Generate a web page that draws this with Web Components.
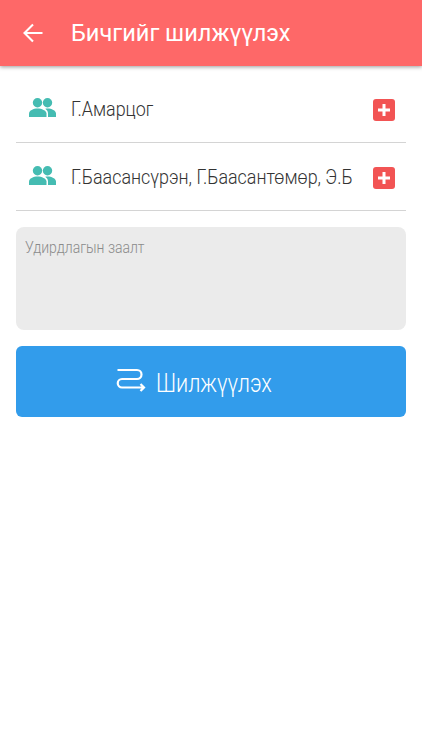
<!DOCTYPE html>
<html><head><meta charset="utf-8"><style>
html,body{margin:0;padding:0;background:#fff;font-family:Roboto,"Noto Sans",sans-serif}
body{width:422px;height:750px;overflow:hidden}
</style></head><body>
<app-bar title="Бичгийг шилжүүлэх"></app-bar>
<main-form>
<person-row>Г.Амарцог</person-row>
<person-row>Г.Баасансүрэн, Г.Баасантөмөр, Э.Б</person-row>
<note-box>Удирдлагын заалт</note-box>
<move-button>Шилжүүлэх</move-button>
</main-form>
<script>
function def(name,html){
 customElements.define(name,class extends HTMLElement{
  constructor(){super();const r=this.attachShadow({mode:'open'});r.innerHTML=html;}
  connectedCallback(){const t=this.shadowRoot.querySelector('[data-title]');if(t)t.textContent=this.getAttribute('title');}
 });
}
def('app-bar',`<style>
:host{display:flex;align-items:center;height:66px;background:#fe6868;color:#fff;box-shadow:0 1px 4px rgba(0,0,0,.4);position:relative;box-sizing:border-box;padding-left:23px}
svg{display:block;width:20px;height:20px;margin-right:28px;flex:none}
h1{margin:0;font:400 24px/1 Roboto,sans-serif;white-space:nowrap;transform:scaleX(.982);transform-origin:left center}
</style><svg viewBox="0 0 20 20" fill="none" stroke="#fff" stroke-width="2.1"><path d="M19.500 10H2M10 1.500L1.500 10l8.500 8.500"/></svg><h1 data-title></h1>`);
def('main-form',`<style>
:host{display:flex;flex-direction:column;padding:9px 16px 0}
</style><slot></slot>`);
def('person-row',`<style>
:host{display:flex;align-items:center;height:67px;border-bottom:1px solid #d4d4d4;padding-left:13px;color:#333}
svg.p{width:27px;height:19px;flex:none;margin-right:15px;margin-top:-3px}
span{flex:1;min-width:0;font:300 20.500px/1 Roboto,sans-serif;white-space:nowrap;transform:scaleX(.873);transform-origin:left center;padding-top:1px}
.add{width:22px;height:22px;flex:none;margin-right:11px;margin-top:2px}
</style><svg class="p" viewBox="0 0 27 19"><circle cx="8.500" cy="4.700" r="4.700" fill="#45bcb2"/><circle cx="18.500" cy="4.700" r="4.700" fill="#45bcb2"/><path fill="#45bcb2" d="M0 19v-3.500C0 12.500 4.500 10.500 8.500 10.500s9 2 9 5V19z"/><path fill="#45bcb2" d="M19 19v-3.500c0-2-1-3.700-2.800-4.800.8-.1 1.700-.2 2.300-.2 4 0 8.500 2 8.500 5V19z"/></svg><span><slot></slot></span><svg class="add" viewBox="0 0 22 22"><rect width="22" height="22" rx="3" fill="#f25454"/><path d="M11 5v12M5 11h12" stroke="#fff" stroke-width="3"/></svg>`);
def('note-box',`<style>
:host{display:block;height:103px;margin-top:16px;background:#ebebeb;border-radius:8px;box-sizing:border-box;padding:11px 9px;font:300 16px/20px Roboto,sans-serif;color:#8a8a8a}
span{display:inline-block;white-space:nowrap;transform:scaleX(.875);transform-origin:left center}
</style><span><slot></slot></span>`);
def('move-button',`<style>
:host{display:flex;align-items:center;justify-content:flex-start;height:71px;margin-top:16px;background:#329ceb;border-radius:6px;color:#fff;font:300 25px/1 Roboto,sans-serif;padding-left:100px}
svg{width:31px;height:24px;margin-right:9px;margin-top:-3px;flex:none}
span{display:inline-block;white-space:nowrap;transform:scaleX(.865);transform-origin:left center;margin-top:3px}
</style><svg viewBox="0 0 31 24" fill="none" stroke="#fff" stroke-width="2.200"><path d="M1.500 2H21a4.500 4.500 0 0 1 0 9H6a4.200 4.200 0 0 0 0 8.500H28M24.500 16l3.500 3.500-3.500 3.500"/></svg><span><slot></slot></span>`);
</script>
</body></html>
